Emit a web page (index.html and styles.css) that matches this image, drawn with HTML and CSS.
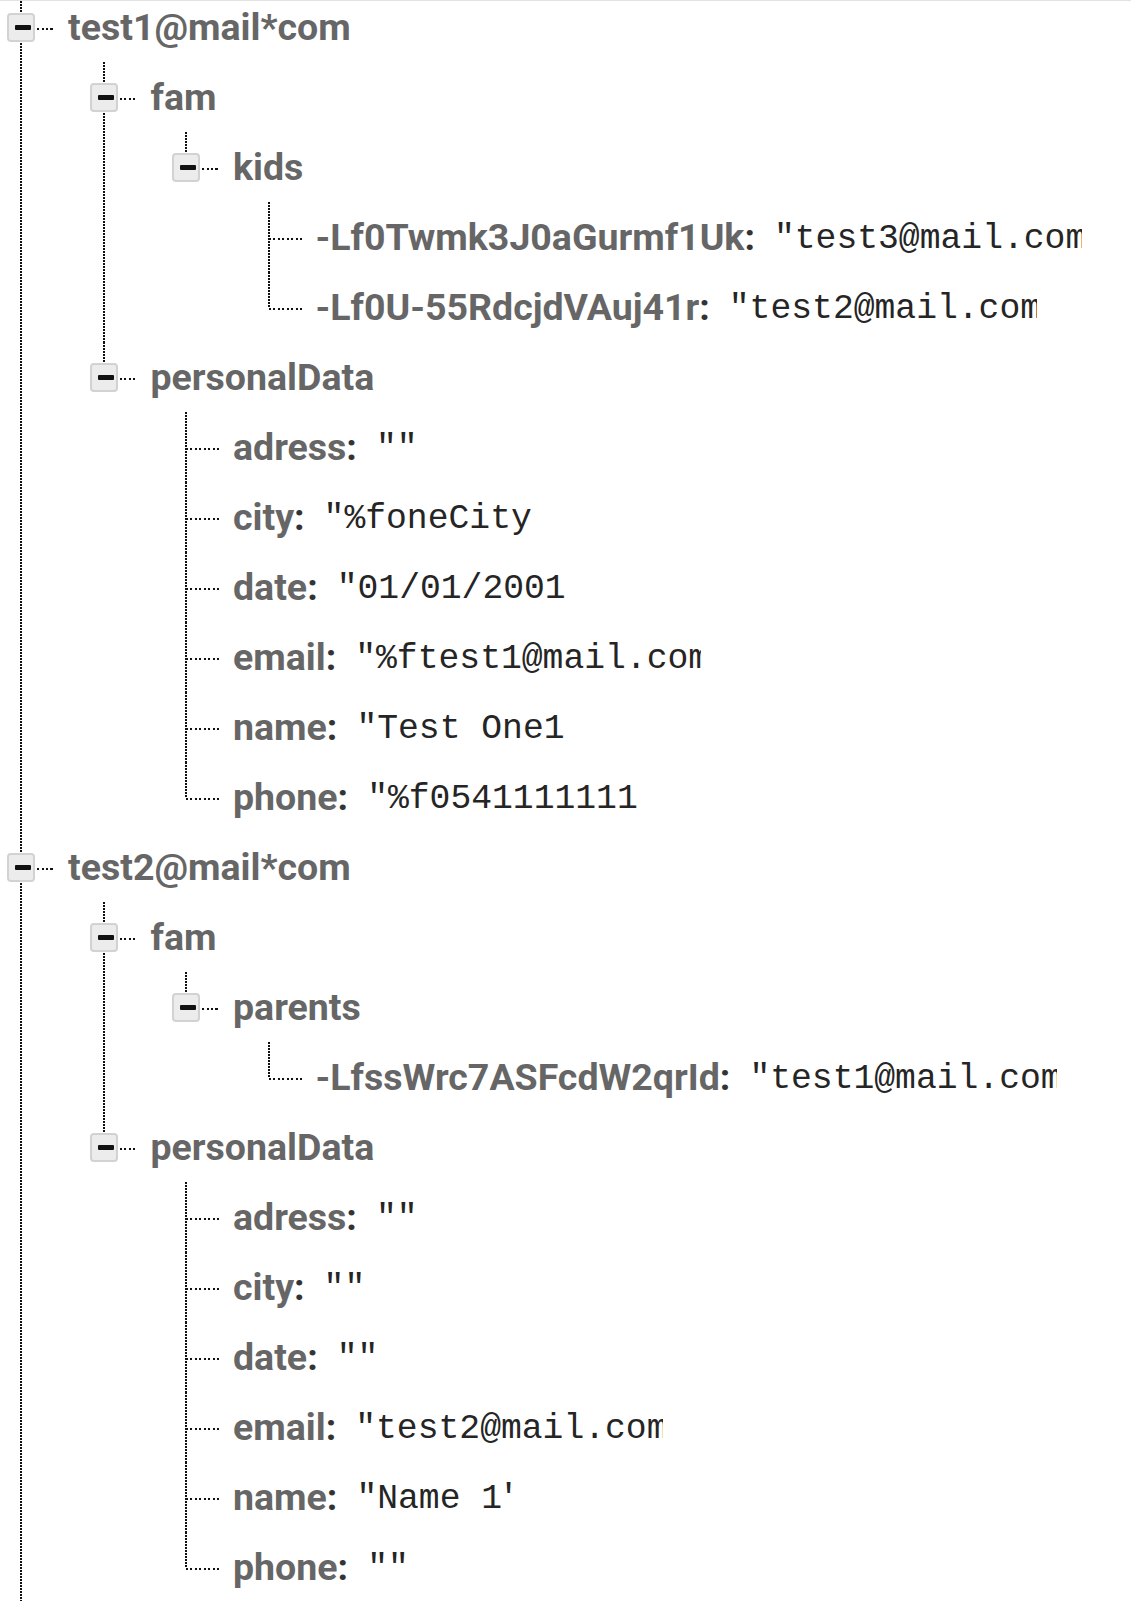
FILE: index.html
```html
<!DOCTYPE html>
<html>
<head>
<meta charset="utf-8">
<link rel="stylesheet" href="styles.css">
</head>
<body>
<div class="tree">
  <ul class="list root">
    <li class="node">
      <div class="row"><span class="toggle"></span><span class="key">test1@mail*com</span></div>
      <ul class="list">
        <li class="node">
          <div class="row"><span class="toggle"></span><span class="key">fam</span></div>
          <ul class="list">
            <li class="node last">
              <div class="row"><span class="toggle"></span><span class="key">kids</span></div>
              <ul class="list">
                <li class="leaf">
                  <div class="row"><span class="key">-Lf0Twmk3J0aGurmf1Uk</span><span class="colon">:</span><span class="val c-mail">"test3@mail.com"</span></div>
                </li>
                <li class="leaf last">
                  <div class="row"><span class="key">-Lf0U-55RdcjdVAuj41r</span><span class="colon">:</span><span class="val c-mail">"test2@mail.com"</span></div>
                </li>
              </ul>
            </li>
          </ul>
        </li>
        <li class="node last">
          <div class="row"><span class="toggle"></span><span class="key">personalData</span></div>
          <ul class="list">
            <li class="leaf"><div class="row"><span class="key">adress</span><span class="colon">:</span><span class="val">""</span></div></li>
            <li class="leaf"><div class="row"><span class="key">city</span><span class="colon">:</span><span class="val c-10">"%foneCity"</span></div></li>
            <li class="leaf"><div class="row"><span class="key">date</span><span class="colon">:</span><span class="val c-11">"01/01/2001"</span></div></li>
            <li class="leaf"><div class="row"><span class="key">email</span><span class="colon">:</span><span class="val c-email1">"%ftest1@mail.com"</span></div></li>
            <li class="leaf"><div class="row"><span class="key">name</span><span class="colon">:</span><span class="val c-10">"Test One1"</span></div></li>
            <li class="leaf last"><div class="row"><span class="key">phone</span><span class="colon">:</span><span class="val c-13">"%f0541111111"</span></div></li>
          </ul>
        </li>
      </ul>
    </li>
    <li class="node">
      <div class="row"><span class="toggle"></span><span class="key">test2@mail*com</span></div>
      <ul class="list">
        <li class="node">
          <div class="row"><span class="toggle"></span><span class="key">fam</span></div>
          <ul class="list">
            <li class="node last">
              <div class="row"><span class="toggle"></span><span class="key">parents</span></div>
              <ul class="list">
                <li class="leaf last">
                  <div class="row"><span class="key">-LfssWrc7ASFcdW2qrId</span><span class="colon">:</span><span class="val c-mail">"test1@mail.com"</span></div>
                </li>
              </ul>
            </li>
          </ul>
        </li>
        <li class="node last">
          <div class="row"><span class="toggle"></span><span class="key">personalData</span></div>
          <ul class="list">
            <li class="leaf"><div class="row"><span class="key">adress</span><span class="colon">:</span><span class="val">""</span></div></li>
            <li class="leaf"><div class="row"><span class="key">city</span><span class="colon">:</span><span class="val">""</span></div></li>
            <li class="leaf"><div class="row"><span class="key">date</span><span class="colon">:</span><span class="val">""</span></div></li>
            <li class="leaf"><div class="row"><span class="key">email</span><span class="colon">:</span><span class="val c-mail">"test2@mail.com"</span></div></li>
            <li class="leaf"><div class="row"><span class="key">name</span><span class="colon">:</span><span class="val c-name">"Name 1"</span></div></li>
            <li class="leaf last"><div class="row"><span class="key">phone</span><span class="colon">:</span><span class="val">""</span></div></li>
          </ul>
        </li>
      </ul>
    </li>
  </ul>
</div>
</body>
</html>
```
FILE: styles.css
```css
html, body {
  margin: 0;
  padding: 0;
  background: #fff;
}
body {
  border-top: 1px solid #e2e2e2;
  overflow: hidden;
}
.tree {
  margin-top: -9px;
  padding-left: 20px;
}
.list {
  list-style: none;
  margin: 0;
  padding: 0;
}
.list .list {
  margin-left: 82.5px;
}
.list li {
  position: relative;
}
.list li::before {
  content: "";
  position: absolute;
  left: 0;
  top: 0;
  width: 2px;
  height: 100%;
  background: repeating-linear-gradient(180deg, #111 0 2px, transparent 2px 3px);
}
.list li.last::before {
  height: 36px;
}
.node.last::before {
  height: 22px;
}
.row {
  position: relative;
  height: 70px;
  line-height: 70px;
  padding-left: 48px;
  white-space: nowrap;
}
.row::before {
  content: "";
  position: absolute;
  top: 36px;
  height: 2px;
  background: repeating-linear-gradient(90deg, #111 0 2px, transparent 2px 4.5px);
}
.leaf > .row::before {
  left: 1px;
  width: 36px;
}
.node > .row::before {
  left: 17px;
  width: 18px;
}
.toggle {
  position: absolute;
  left: -13px;
  top: 21px;
  width: 28px;
  height: 29px;
  box-sizing: border-box;
  border: 2px solid #d2d2d2;
  border-radius: 4px;
  background: #ececec;
  z-index: 1;
}
.toggle::after {
  content: "";
  position: absolute;
  left: 6px;
  top: 10px;
  width: 16px;
  height: 5px;
  border-radius: 1px;
  background: #111;
}
.key {
  font-family: Roboto, "Liberation Sans", sans-serif;
  font-weight: 700;
  font-size: 37.5px;
  color: #666;
}
.colon {
  font-family: Roboto, "Liberation Sans", sans-serif;
  font-weight: 700;
  font-size: 37.5px;
  color: #333;
}
.val {
  display: inline-block;
  vertical-align: top;
  height: 70px;
  line-height: 74px;
  margin-left: 19px;
  overflow: hidden;
  font-family: "Liberation Mono", "DejaVu Sans Mono", monospace;
  font-size: 34.7px;
  color: #252525;
}
.c-mail { width: 14.8ch; }
.c-email1 { width: 16.6ch; }
.c-name { width: 7.55ch; }
.c-10 { width: 10ch; }
.c-11 { width: 11ch; }
.c-13 { width: 13ch; }
```
